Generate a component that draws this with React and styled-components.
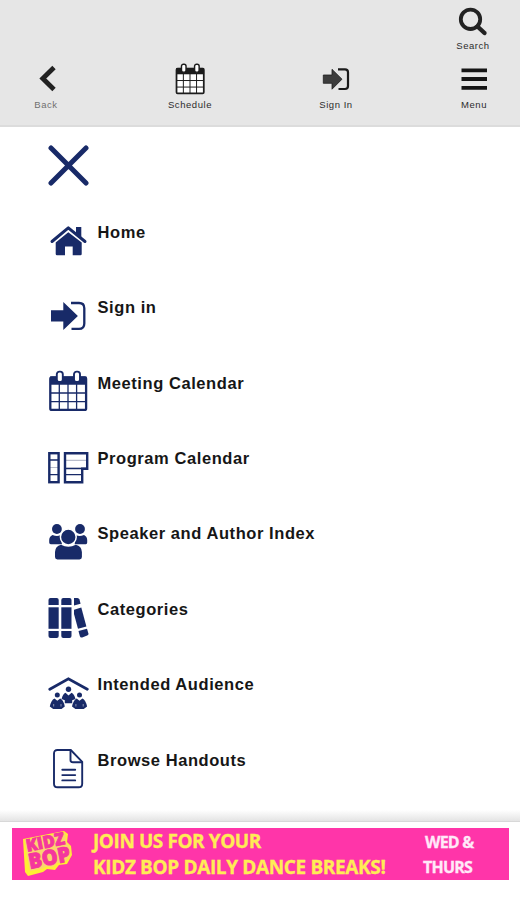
import React from "react";
import styled, { createGlobalStyle } from "styled-components";

const NAVY = "#182a68";

const GlobalStyle = createGlobalStyle`
  body {
    margin: 0;
    background: #fff;
    font-family: "Liberation Sans", Arial, sans-serif;
  }
`;

const Page = styled.div`
  width: 520px;
  height: 900px;
  display: flex;
  flex-direction: column;
  overflow: hidden;
  background: #fff;
`;

const Header = styled.header`
  box-sizing: border-box;
  height: 127px;
  flex: none;
  padding: 6px 0 0 18px;
  background: #e6e6e6;
  border-bottom: 2px solid #dcdcdc;
`;

const SearchRow = styled.div`
  display: flex;
  justify-content: flex-end;
  height: 57px;
  padding-right: 19px;
`;

const NavRow = styled.nav`
  display: grid;
  grid-template-columns: 144px 146px 138px 56px;
`;

const NavButton = styled.button`
  display: flex;
  flex-direction: column;
  align-items: center;
  width: 56px;
  padding: 0;
  border: 0;
  background: none;
  color: ${(props) => (props.$muted ? "#707070" : "#2c2c2c")};
  font: 9.5px/12px "Liberation Sans", Arial, sans-serif;
  letter-spacing: 0.55px;
  white-space: nowrap;
  svg {
    display: block;
    margin-bottom: ${(props) => props.$gap || "4px"};
  }
`;

const Menu = styled.main`
  height: 683px;
  flex: none;
  box-sizing: border-box;
  padding: 17px 0 0 47px;
`;

const CloseButton = styled.button`
  display: flex;
  align-items: flex-start;
  height: 75.5px;
  padding: 0;
  border: 0;
  background: none;
`;

const MenuList = styled.ul`
  margin: 0;
  padding: 0;
  list-style: none;
`;

const MenuItem = styled.li`
  display: flex;
  gap: 8.5px;
  height: 75.45px;
`;

const MenuLabel = styled.span`
  padding-top: 2.2px;
  font-size: 16.5px;
  line-height: 20px;
  font-weight: bold;
  letter-spacing: 0.57px;
  color: #161616;
`;

const Shade = styled.div`
  height: 11px;
  flex: none;
  background: linear-gradient(#fff, #e4e4e4);
  border-bottom: 1px solid #d8d8d8;
`;

const Banner = styled.aside`
  display: flex;
  width: 497px;
  height: 52px;
  flex: none;
  margin: 6px 0 0 12px;
  background: #ff35a9;
  font-family: "Open Sans", "Noto Sans", sans-serif;
  font-weight: bold;
  white-space: nowrap;
`;

const Slogan = styled.div`
  width: 330px;
  font-size: 19px;
  line-height: 26px;
  color: #ffec55;
  -webkit-text-stroke: 0.3px #ffec55;
`;

const Days = styled.div`
  padding-top: 2px;
  font-size: 16px;
  line-height: 24.5px;
  color: #ffe9f8;
  -webkit-text-stroke: 0.3px #ffe9f8;
`;

const Line = styled.div`
  margin-left: ${(props) => props.$indent || 0}px;
  letter-spacing: ${(props) => props.$spacing}px;
`;

const LogoSvg = styled.svg`
  display: block;
  flex: none;
  overflow: visible;
`;

const Icon = ({ size = 42, children }) => (
  <svg width={size} height={size} viewBox={`0 0 ${size} ${size}`} fill="none">
    {children}
  </svg>
);

const HomeIcon = () => (
  <Icon>
    <path d="M29 7H34.3V19L29 14Z" fill={NAVY} />
    <path d="M5 21.5L21.3 7.8L38 21.5" stroke={NAVY} strokeWidth="3" strokeLinecap="round" strokeLinejoin="round" />
    <path d="M8.7 22.5L21.3 12.3L34.7 22.5V34Q34.7 35.3 33.4 35.3H25.7V26.5H18V35.3H10Q8.7 35.3 8.7 34Z" fill={NAVY} />
  </Icon>
);

const SignInIcon = () => (
  <Icon>
    <path d="M4 15.2H16.3V7L30.9 21L16.3 35V26.5H4Z" fill={NAVY} />
    <path d="M24 8H32Q37.3 8 37.3 13.3V28.5Q37.3 33.9 32 33.9H24.5" stroke={NAVY} strokeWidth="2.3" />
  </Icon>
);

const CalendarIcon = ({ color = NAVY, size = 42 }) => (
  <svg width={size} height={size} viewBox="0 0 42 42" fill="none">
    <rect x="3.3" y="7.5" width="35.8" height="32.4" rx="1.5" fill="#fff" stroke={color} strokeWidth="2.3" />
    <path d="M3 6.5H39.5V14.8H3Z" fill={color} />
    <path d="M12.3 14V40M21 14V40M29.6 14V40M3 23H39M3 31.6H39" stroke={color} strokeWidth="1.3" />
    <rect x="9.8" y="1.6" width="6" height="10.4" rx="2.6" fill="#fff" stroke={color} strokeWidth="1.9" />
    <rect x="27" y="1.6" width="6" height="10.4" rx="2.6" fill="#fff" stroke={color} strokeWidth="1.9" />
  </svg>
);

const ProgramIcon = () => (
  <Icon>
    <path d="M3 21.5H12M18 14.3H40M18 21.5H40" stroke="#b9bdcb" strokeWidth="1.2" />
    <path d="M2 14H12M2 28.6H12M18 28.6H36M18 22.7H40" stroke={NAVY} strokeWidth="1.3" />
    <rect x="2.3" y="7.2" width="9.3" height="29" stroke={NAVY} strokeWidth="2.4" />
    <path d="M18 7.2H40.2V22.7H35.2V36.2H18Z" stroke={NAVY} strokeWidth="2.4" />
  </Icon>
);

const SpeakerIcon = () => (
  <Icon>
    <circle cx="9.9" cy="8" r="4.9" fill={NAVY} />
    <circle cx="33" cy="8" r="4.9" fill={NAVY} />
    <path d="M5.5 13.9Q10 16 13.3 14.2L15 23.3H3.8Q2.2 23.3 2.2 21.5V19Q2.2 15.5 5.5 13.9Z" fill={NAVY} />
    <path d="M37 13.9Q32.6 16 29.3 14.2L27.6 23.3H38.8Q40.2 23.3 40.2 21.5V19Q40.2 15.5 37 13.9Z" fill={NAVY} />
    <circle cx="21.3" cy="16" r="7.9" fill={NAVY} stroke="#fff" strokeWidth="1.5" />
    <path d="M14 23.7Q21.3 28 28.8 23.7Q34.7 25 34.9 31V36Q34.9 38.4 32.5 38.4H10.4Q8 38.4 8 36V31Q8.2 25 14 23.7Z" fill={NAVY} />
  </Icon>
);

const CategoriesIcon = () => (
  <Icon>
    <g fill={NAVY}>
      <path d="M1.5 8V3Q1.5 1 3.5 1H9.7Q11.7 1 11.7 3V8Z" />
      <path d="M1.5 10.3H11.7V31.8H1.5Z" />
      <path d="M1.5 34H11.7V39Q11.7 41 9.7 41H3.5Q1.5 41 1.5 39Z" />
      <path d="M14.3 8V3Q14.3 1 16.3 1H22.5Q24.5 1 24.5 3V8Z" />
      <path d="M14.3 10.3H24.5V31.8H14.3Z" />
      <path d="M14.3 34H24.5V39Q24.5 41 22.5 41H16.3Q14.3 41 14.3 39Z" />
      <path d="M27 1H30.3Q32 1 32.5 2.6L33.6 6.7L27 8.5Z" />
      <path d="M27 12.7L34.3 10.6L39.4 29.4L31 31.8L27 17Z" />
      <path d="M31.5 34.1L40 31.7L41.4 36.4Q41.8 38 40.2 38.6L35.2 40.4Q33.4 41 32.8 39Z" />
    </g>
  </Icon>
);

const AudienceIcon = () => (
  <Icon>
    <path d="M2.8 17.2L21.4 6.8L40.3 17.2" stroke={NAVY} strokeWidth="2.8" strokeLinecap="round" />
    <g fill={NAVY}>
      <circle cx="21.5" cy="17.2" r="2.7" />
      <circle cx="10.3" cy="23.1" r="2.5" />
      <circle cx="32.5" cy="23.1" r="2.5" />
      <path d="M18.5 20.8L21.5 23.5L24.5 20.8Q27 21.5 28.5 27L25.2 28.2V31.3H17.8V28.2L14.6 27Q16 21.5 18.5 20.8Z" />
      <path d="M7.5 26.5L10.3 28.8L13.2 26.5Q16.5 28 17.8 34.5L14.5 36.9H6.2L2.8 34.5Q4.2 28 7.5 26.5Z" />
      <path d="M29.7 26.5L32.5 28.8L35.4 26.5Q38.7 28 40.1 34.5L36.7 36.9H28.4L25 34.5Q26.4 28 29.7 26.5Z" />
    </g>
    <path d="M6.7 32V34.5M14 32V34.5M28.9 32V34.5M36.2 32V34.5" stroke="#fff" strokeWidth="0.5" />
  </Icon>
);

const HandoutIcon = () => (
  <Icon>
    <path d="M10.5 2H23.8L35.2 13.8V35.7Q35.2 39.3 31.6 39.3H10.6Q7 39.3 7 35.7V5.6Q7 2 10.5 2Z" stroke={NAVY} strokeWidth="1.9" />
    <path d="M23.5 2V12Q23.5 14.2 25.7 14.2H35" stroke={NAVY} strokeWidth="1.9" />
    <path d="M15.3 21.8H28.2M15.3 27.1H28.2M15.3 32.4H28.2" stroke={NAVY} strokeWidth="1.9" strokeLinecap="round" />
  </Icon>
);

const CloseIcon = () => (
  <Icon>
    <path d="M4 4L39 39M39 4L4 39" stroke={NAVY} strokeWidth="5" strokeLinecap="round" />
  </Icon>
);

const SearchIcon = () => (
  <Icon size={32}>
    <circle cx="13.5" cy="13.3" r="9.7" stroke="#222" strokeWidth="3.8" />
    <path d="M20.5 20.5L27.5 27" stroke="#222" strokeWidth="4.4" strokeLinecap="round" />
  </Icon>
);

const BackIcon = () => (
  <Icon size={32}>
    <path d="M24 4.5L12.8 15.5L24 26.5" stroke="#222" strokeWidth="4.8" />
  </Icon>
);

const EnterIcon = () => (
  <Icon size={32}>
    <path d="M3.3 12H12V6.3L22 16.2L12 26.2V20.3H3.3Z" fill="#3d3d3d" stroke="#1f1f1f" strokeWidth="0.8" />
    <path d="M18 6.3H25Q28 6.3 28 9.3V23Q28 26 25 26H18.5" stroke="#1c1c1c" strokeWidth="2.2" />
  </Icon>
);

const BarsIcon = () => (
  <Icon size={32}>
    <path d="M3.5 7.3H29M3.5 16H29M3.5 24.8H29" stroke="#151515" strokeWidth="3.8" />
  </Icon>
);

const KidzBopLogo = () => (
  <LogoSvg width="81" height="52" viewBox="0 0 81 52">
    <path
      d="M11 11L52 3L56 6L55 14L59 18L60 27L55 36L47 37L43 42L35 41L31 44L16 48L13 44Z"
      fill="#ffee33"
    />
    <path
      d="M13 12L53 4.5L54 14L58 19L58.5 27L53 34L45 35L41 39L34 38.5L29 41L18 43L15 27Z"
      fill="#fbd56f"
    />
    <g
      fontFamily="Open Sans, sans-serif"
      fontWeight="800"
      fill="#f5369d"
      stroke="#f5369d"
      strokeWidth="0.9"
      transform="rotate(-11 32 26)"
    >
      <text x="16" y="20.5" fontSize="17" textLength="39" lengthAdjust="spacingAndGlyphs">
        KIDZ
      </text>
      <text x="15.5" y="38" fontSize="21" textLength="42" lengthAdjust="spacingAndGlyphs">
        BOP
      </text>
    </g>
  </LogoSvg>
);

const menuItems = [
  { label: "Home", icon: HomeIcon },
  { label: "Sign in", icon: SignInIcon },
  { label: "Meeting Calendar", icon: CalendarIcon },
  { label: "Program Calendar", icon: ProgramIcon },
  { label: "Speaker and Author Index", icon: SpeakerIcon },
  { label: "Categories", icon: CategoriesIcon },
  { label: "Intended Audience", icon: AudienceIcon },
  { label: "Browse Handouts", icon: HandoutIcon },
];

const App = () => {
  return (
    <Page>
      <GlobalStyle />
      <Header>
        <SearchRow>
          <NavButton $gap="2px">
            <SearchIcon />
            Search
          </NavButton>
        </SearchRow>
        <NavRow>
          <NavButton $muted>
            <BackIcon />
            Back
          </NavButton>
          <NavButton>
            <CalendarIcon color="#1c1c1c" size={32} />
            Schedule
          </NavButton>
          <NavButton>
            <EnterIcon />
            Sign In
          </NavButton>
          <NavButton>
            <BarsIcon />
            Menu
          </NavButton>
        </NavRow>
      </Header>
      <Menu>
        <CloseButton aria-label="Close">
          <CloseIcon />
        </CloseButton>
        <MenuList>
          {menuItems.map(({ label, icon: ItemIcon }) => (
            <MenuItem key={label}>
              <ItemIcon />
              <MenuLabel>{label}</MenuLabel>
            </MenuItem>
          ))}
        </MenuList>
      </Menu>
      <Shade />
      <Banner>
        <KidzBopLogo />
        <Slogan>
          <Line $spacing={-0.43}>JOIN US FOR YOUR</Line>
          <Line $spacing={-0.36}>KIDZ BOP DAILY DANCE BREAKS!</Line>
        </Slogan>
        <Days>
          <Line $indent={2} $spacing={-0.8}>WED &amp;</Line>
          <Line $spacing={-0.8}>THURS</Line>
        </Days>
      </Banner>
    </Page>
  );
};

export default App;
